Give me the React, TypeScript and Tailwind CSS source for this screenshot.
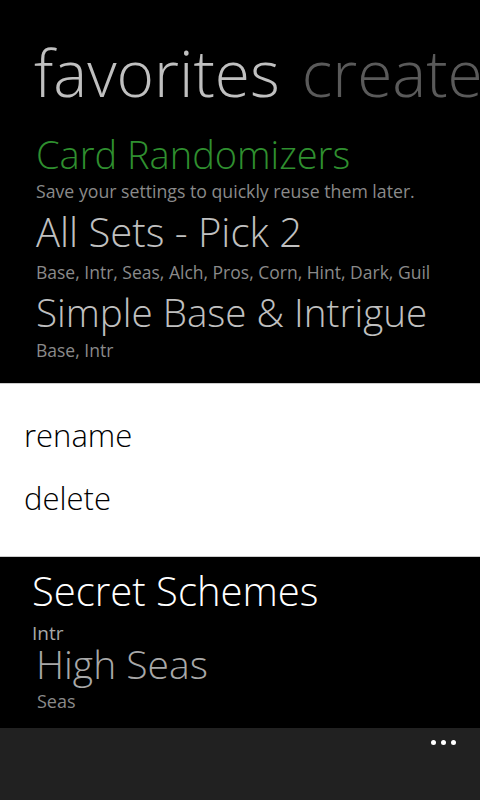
import React from "react";

const font = { fontFamily: '"Open Sans", "Noto Sans", sans-serif' };

export default function App() {
  return (
    <div className="w-[480px] h-[800px] bg-black overflow-hidden flex flex-col" style={font}>
      {/* top dimmed area */}
      <div className="h-[383px] flex flex-col">
        <div className="mt-[38px] h-[70px] flex items-start gap-[22px] whitespace-nowrap overflow-hidden pl-[34px]">
          <span className="text-[64px] leading-[70px] font-light text-[#c0c0c0]">favorites</span>
          <span className="text-[64px] leading-[70px] font-light text-[#5a5a5a]">create</span>
        </div>
        <div className="pl-[36px] flex flex-col">
          <div className="mt-[24px] h-[44px] text-[38px] leading-[44px] font-light text-[#2f8f2f] whitespace-nowrap">Card Randomizers</div>
          <div className="mt-[3px] h-[24px] text-[17.7px] leading-[24px] text-[#8a8a8a] whitespace-nowrap">Save your settings to quickly reuse them later.</div>
          <div className="mt-[5px] h-[48px] text-[40px] leading-[48px] font-light text-[#c0c0c0] whitespace-nowrap">All Sets - Pick 2</div>
          <div className="mt-[4px] h-[24px] text-[17.5px] leading-[24px] text-[#8a8a8a] whitespace-nowrap">Base, Intr, Seas, Alch, Pros, Corn, Hint, Dark, Guil</div>
          <div className="mt-[4px] h-[48px] text-[38.6px] leading-[48px] font-light text-[#c0c0c0] whitespace-nowrap">Simple Base &amp; Intrigue</div>
          <div className="mt-[2px] h-[24px] text-[17.5px] leading-[24px] text-[#8a8a8a] whitespace-nowrap">Base, Intr</div>
        </div>
      </div>

      {/* context menu */}
      <div className="h-[174px] bg-white border-y border-[#cccccc] flex flex-col pl-[24px]">
        <div className="mt-[31px] h-[40px] text-[31px] leading-[40px] font-light text-black">rename</div>
        <div className="mt-[23px] h-[40px] text-[31px] leading-[40px] font-light text-black">delete</div>
      </div>

      {/* bottom list */}
      <div className="h-[171px] flex flex-col">
        <div className="mt-[8px] h-[52px] pl-[32px] text-[40px] leading-[52px] font-light text-white whitespace-nowrap">Secret Schemes</div>
        <div className="mt-[6px] h-[20px] pl-[32px] text-[19px] leading-[20px] text-[#a8a8a8]">Intr</div>
        <div className="mt-[3px] h-[36px] pl-[36px] text-[39px] leading-[36px] font-light text-[#a8a8a8] whitespace-nowrap">High Seas</div>
        <div className="mt-[7px] h-[24px] pl-[37px] text-[18px] leading-[24px] text-[#8a8a8a]">Seas</div>
      </div>

      {/* app bar */}
      <div className="flex-1 bg-[#212121] flex justify-end items-start pt-[12px] pr-[24px] gap-[5px]">
        <div className="w-[5px] h-[5px] rounded-full bg-white" />
        <div className="w-[5px] h-[5px] rounded-full bg-white" />
        <div className="w-[5px] h-[5px] rounded-full bg-white" />
      </div>
    </div>
  );
}
